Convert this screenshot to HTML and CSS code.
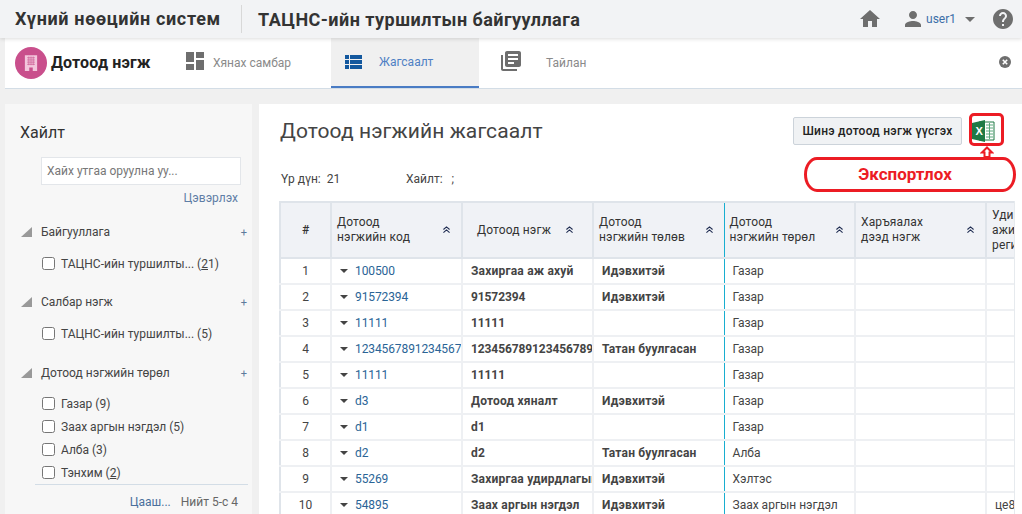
FILE: index.html
```html
<!DOCTYPE html>
<html>

<head>
    <title>Дотоод нэгж</title>
    <meta charset="utf-8" />
    <link rel="stylesheet" href="styles.css">
</head>

<body>
    <header class="topbar">
        <div class="app-name">Хүний нөөцийн систем</div>
        <div class="org-name">ТАЦНС-ийн туршилтын байгууллага</div>
        <div class="top-tools">
            <svg class="top-home" viewBox="0 0 24 24"><path d="M10 20v-6h4v6h5v-8h3L12 3 2 12h3v8z" /></svg>
            <svg class="top-user" viewBox="0 0 24 24"><path d="M12 12c2.21 0 4-1.79 4-4s-1.79-4-4-4-4 1.79-4 4 1.79 4 4 4zm0 2c-2.67 0-8 1.34-8 4v2h16v-2c0-2.66-5.33-4-8-4z" /></svg>
            <span class="user-name">user1</span>
            <span class="user-caret"></span>
            <svg class="top-help" viewBox="0 0 24 24"><path d="M12 2C6.48 2 2 6.48 2 12s4.48 10 10 10 10-4.48 10-10S17.52 2 12 2zm1 17h-2v-2h2v2zm2.07-7.75l-.9.92C13.45 12.9 13 13.5 13 15h-2v-.5c0-1.1.45-2.1 1.17-2.83l1.24-1.26c.37-.36.59-.86.59-1.41 0-1.1-.9-2-2-2s-2 .9-2 2H8c0-2.21 1.79-4 4-4s4 1.79 4 4c0 .88-.36 1.68-.93 2.25z" /></svg>
        </div>
    </header>

    <nav class="tabbar">
        <div class="module">
            <span class="module-icon">
                <svg viewBox="0 0 16 18" width="14" height="16">
                    <path class="bld" d="M1 0h14v18h-5v-4H6v4H1z" />
                    <path class="bld-lines" d="M3.5 3h9M3.5 5.5h9M3.5 8h9M3.5 10.5h9M5.5 1.5v10M8 1.5v10M10.5 1.5v10" />
                </svg>
            </span>
            <span class="module-name">Дотоод нэгж</span>
        </div>
        <a class="tab tab-board">
            <svg class="tab-icon" viewBox="3 3 18 18"><path d="M3 13h8V3H3v10zm0 8h8v-6H3v6zm10 0h8V11h-8v10zm0-18v6h8V3h-8z" /></svg>
            <span>Хянах самбар</span>
        </a>
        <a class="tab tab-list active">
            <svg class="list-icon" viewBox="0 0 17 14"><path d="M0 0h17v4H0zM0 5h17v4H0zM0 10h17v4H0z" /><path class="list-cut" d="M4.5 0v14" /></svg>
            <span>Жагсаалт</span>
        </a>
        <a class="tab tab-report">
            <svg class="report-icon" viewBox="2 2 20 20"><path d="M4 6H2v14c0 1.1.9 2 2 2h14v-2H4V6zm16-4H8c-1.1 0-2 .9-2 2v12c0 1.1.9 2 2 2h12c1.1 0 2-.9 2-2V4c0-1.1-.9-2-2-2zm-1 9H9V9h10v2zm-4 4H9v-2h6v2zm4-8H9V5h10v2z" /></svg>
            <span>Тайлан</span>
        </a>
        <svg class="tab-close" viewBox="0 0 12 12">
            <circle cx="6" cy="6" r="6" />
            <path d="M3.8 3.8l4.4 4.4M8.2 3.8l-4.4 4.4" />
        </svg>
    </nav>

    <div class="content">
        <aside class="sidebar">
            <h2 class="side-title">Хайлт</h2>
            <div class="search-box">Хайх утгаа оруулна уу...</div>
            <div class="clear-link">Цэвэрлэх</div>

            <div class="facet">
                <div class="facet-head">
                    <svg class="facet-arrow" viewBox="0 0 11 10"><path d="M11 0v10H0z" /></svg>
                    <span class="facet-name">Байгууллага</span>
                    <span class="facet-plus">+</span>
                </div>
                <label class="facet-item"><input type="checkbox"><span>ТАЦНС-ийн туршилты... (<u>2</u>1)</span></label>
            </div>

            <div class="facet">
                <div class="facet-head">
                    <svg class="facet-arrow" viewBox="0 0 11 10"><path d="M11 0v10H0z" /></svg>
                    <span class="facet-name">Салбар нэгж</span>
                    <span class="facet-plus">+</span>
                </div>
                <label class="facet-item"><input type="checkbox"><span>ТАЦНС-ийн туршилты... (5)</span></label>
            </div>

            <div class="facet facet-last">
                <div class="facet-head">
                    <svg class="facet-arrow" viewBox="0 0 11 10"><path d="M11 0v10H0z" /></svg>
                    <span class="facet-name">Дотоод нэгжийн төрөл</span>
                    <span class="facet-plus">+</span>
                </div>
                <label class="facet-item"><input type="checkbox"><span>Газар (9)</span></label>
                <label class="facet-item"><input type="checkbox"><span>Заах аргын нэгдэл (5)</span></label>
                <label class="facet-item"><input type="checkbox"><span>Алба (3)</span></label>
                <label class="facet-item"><input type="checkbox"><span>Тэнхим (<u>2</u>)</span></label>
            </div>
            <div class="facet-foot">
                <span class="more-link">Цааш...</span>
                <span>Нийт 5-с 4</span>
            </div>
        </aside>

        <main class="main">
            <div class="main-head">
                <h1 class="page-title">Дотоод нэгжийн жагсаалт</h1>
                <button class="new-btn">Шинэ дотоод нэгж үүсгэх</button>
                <svg class="excel-icon" viewBox="0 0 23 22">
                    <path class="xl-sheet" d="M7 2h15v18H7z" />
                    <path class="xl-lines" d="M14 5h7M14 8h7M14 11h7M14 14h7M14 17h7M17.500 3v16" />
                    <path class="xl-cover" d="M0 3l13-3v22L0 19z" />
                    <text class="xl-x" x="3.500" y="15">X</text>
                </svg>
            </div>
            <div class="summary">
                <span class="sum-count">Үр дүн:&nbsp; 21</span>
                <span class="sum-query">Хайлт: &nbsp; ;</span>
            </div>

            <div class="table-wrap">
                <table class="grid">
                    <colgroup>
                        <col class="col-num">
                        <col class="col-std">
                        <col class="col-std">
                        <col class="col-std">
                        <col class="col-std">
                        <col class="col-std">
                        <col class="col-std">
                    </colgroup>
                    <thead>
                        <tr>
                            <th class="num">#</th>
                            <th><div class="th-in">Дотоод<br>нэгжийн код<svg class="sort" viewBox="0 0 8 8"><path d="M.5 4L4 1l3.500 3M.5 7.500L4 4.500l3.500 3" /></svg></div></th>
                            <th><div class="th-in th-center">Дотоод нэгж<svg class="sort" viewBox="0 0 8 8"><path d="M.5 4L4 1l3.500 3M.5 7.500L4 4.500l3.500 3" /></svg></div></th>
                            <th class="status"><div class="th-in">Дотоод<br>нэгжийн төлөв<svg class="sort" viewBox="0 0 8 8"><path d="M.5 4L4 1l3.500 3M.5 7.500L4 4.500l3.500 3" /></svg></div></th>
                            <th><div class="th-in">Дотоод<br>нэгжийн төрөл<svg class="sort" viewBox="0 0 8 8"><path d="M.5 4L4 1l3.500 3M.5 7.500L4 4.500l3.500 3" /></svg></div></th>
                            <th><div class="th-in">Харъяалах<br>дээд нэгж<svg class="sort" viewBox="0 0 8 8"><path d="M.5 4L4 1l3.500 3M.5 7.500L4 4.500l3.500 3" /></svg></div></th>
                            <th><div class="th-in">Удирдах<br>ажилтны<br>регистр</div></th>
                        </tr>
                    </thead>
                    <tbody>
                        <tr><td class="num">1</td><td class="code"><i></i><a>100500</a></td><td class="b">Захиргаа аж ахуй</td><td class="b status">Идэвхитэй</td><td>Газар</td><td></td><td></td></tr>
                        <tr><td class="num">2</td><td class="code"><i></i><a>91572394</a></td><td class="b n">91572394</td><td class="b status">Идэвхитэй</td><td>Газар</td><td></td><td></td></tr>
                        <tr><td class="num">3</td><td class="code"><i></i><a>11111</a></td><td class="b n">11111</td><td class="b status"></td><td>Газар</td><td></td><td></td></tr>
                        <tr><td class="num">4</td><td class="code"><i></i><a>1234567891234567</a></td><td class="b n">123456789123456789</td><td class="b status">Татан буулгасан</td><td>Газар</td><td></td><td></td></tr>
                        <tr><td class="num">5</td><td class="code"><i></i><a>11111</a></td><td class="b n">11111</td><td class="b status"></td><td>Газар</td><td></td><td></td></tr>
                        <tr><td class="num">6</td><td class="code"><i></i><a>d3</a></td><td class="b">Дотоод хяналт</td><td class="b status">Идэвхитэй</td><td>Газар</td><td></td><td></td></tr>
                        <tr><td class="num">7</td><td class="code"><i></i><a>d1</a></td><td class="b">d1</td><td class="b status"></td><td>Газар</td><td></td><td></td></tr>
                        <tr><td class="num">8</td><td class="code"><i></i><a>d2</a></td><td class="b">d2</td><td class="b status">Татан буулгасан</td><td>Алба</td><td></td><td></td></tr>
                        <tr><td class="num">9</td><td class="code"><i></i><a>55269</a></td><td class="b">Захиргаа удирдлагын</td><td class="b status">Идэвхитэй</td><td>Хэлтэс</td><td></td><td></td></tr>
                        <tr><td class="num">10</td><td class="code"><i></i><a>54895</a></td><td class="b">Заах аргын нэгдэл</td><td class="b status">Идэвхитэй</td><td>Заах аргын нэгдэл</td><td></td><td>це89</td></tr>
                    </tbody>
                </table>
            </div>
        </main>
    </div>

    <!-- annotation drawn on top of the screenshot -->
    <div class="mark-box"></div>
    <svg class="mark-arrow" viewBox="0 0 14 12"><path d="M7 1.500L12 6.500H9.500V11H4.500V6.500H2z" /></svg>
    <div class="mark-label">Экспортлох</div>
</body>

</html>
```

FILE: styles.css
```css
html,
body {
    margin: 0;
    height: 514px;
    overflow: hidden;
}

body {
    position: relative;
    background-color: #f0f0f0;
    font-family: Roboto, "Liberation Sans", sans-serif;
    font-size: 12px;
    color: #333;
}

/* top bar */
.topbar {
    display: flex;
    align-items: center;
    height: 38px;
    padding-left: 15px;
    background-color: #f2f3f5;
    box-shadow: 0 1px 4px rgba(0, 0, 0, .14);
    position: relative;
    z-index: 1;
}

.app-name {
    width: 226px;
    height: 28px;
    line-height: 28px;
    border-right: 1px solid #d8d8d8;
    font-size: 18px;
    font-weight: 700;
    letter-spacing: .65px;
    color: #333;
}

.org-name {
    margin-left: 16px;
    font-size: 18px;
    font-weight: 700;
    letter-spacing: .47px;
    color: #333;
}

.top-tools {
    display: flex;
    align-items: center;
    margin-left: auto;
    padding-right: 7px;
}

.top-tools svg {
    fill: #6e6e6e;
}

.top-home {
    width: 24px;
    height: 24px;
}

.top-user {
    width: 24px;
    height: 24px;
    margin-left: 19px;
}

.user-name {
    margin-left: 1px;
    color: #3c6ea8;
}

.user-caret {
    margin-left: 9px;
    border-top: 5px solid #6e6e6e;
    border-left: 5px solid transparent;
    border-right: 5px solid transparent;
}

.top-help {
    width: 24px;
    height: 24px;
    margin-left: 16px;
}

/* tab bar */
.tabbar {
    display: flex;
    align-items: stretch;
    height: 50px;
    margin-left: 5px;
    background-color: #fff;
    border-bottom: 1px solid #d3dde6;
}

.module {
    display: flex;
    align-items: center;
    width: 157px;
    padding-left: 10px;
    padding-bottom: 1px;
    box-sizing: border-box;
}

.module-icon {
    display: flex;
    align-items: center;
    justify-content: center;
    width: 32px;
    height: 32px;
    border-radius: 50%;
    background-color: #c94f8c;
}

.bld {
    fill: #f3c6dc;
}

.bld-lines {
    stroke: #c94f8c;
    stroke-width: .7;
    fill: none;
}

.module-name {
    margin-left: 4px;
    font-size: 16px;
    font-weight: 700;
    letter-spacing: .15px;
    color: #222;
}

.tab {
    display: flex;
    align-items: center;
    box-sizing: border-box;
    color: #8a8a8a;
}

.tab-board {
    width: 169px;
    padding-left: 24px;
}

.tab-icon {
    width: 18px;
    height: 18px;
    margin-right: 9px;
    margin-top: -4px;
    fill: #6e6e6e;
}

.tab-list {
    width: 148px;
    height: 50px;
    padding-left: 14px;
    background-color: #f0f0f0;
    border-bottom: 2px solid #4a7cc4;
    color: #4f80c4;
}

.list-icon {
    width: 17px;
    height: 14px;
    margin-right: 17px;
    fill: #13589e;
}

.list-cut {
    stroke: #f0f0f0;
    stroke-width: 1;
}

.tab-report {
    padding-left: 22px;
}

.report-icon {
    width: 20px;
    height: 20px;
    margin-right: 25px;
    margin-top: -5px;
    fill: #6e6e6e;
}

.tab-close {
    width: 12px;
    height: 12px;
    margin-left: auto;
    margin-right: 11px;
    margin-top: 18px;
    fill: #6e6e6e;
    stroke: #fff;
    stroke-width: 1.600;
}

.tab-close circle {
    stroke: none;
}

/* page body */
.content {
    display: flex;
    margin-left: 5px;
    margin-top: 15px;
    height: 410px;
}

.sidebar {
    width: 247px;
    flex-shrink: 0;
    box-sizing: border-box;
    padding: 19px 0 0 15px;
    background-color: #f7f7f7;
}

.side-title {
    margin: 0;
    font-size: 16px;
    font-weight: 400;
    line-height: 20px;
    color: #333;
}

.search-box {
    width: 200px;
    height: 28px;
    line-height: 26px;
    box-sizing: border-box;
    margin: 14px 0 0 21px;
    padding-left: 5px;
    background-color: #fff;
    border: 1px solid #e3e6ea;
    color: #777;
}

.clear-link {
    width: 218px;
    margin-top: 6px;
    text-align: right;
    color: #5f7ea6;
    line-height: 14px;
}

.facet {
    margin-top: 17px;
}

.facet-head {
    display: flex;
    align-items: center;
    height: 20px;
}

.facet-arrow {
    width: 11px;
    height: 10px;
    fill: #999;
    margin-left: 1px;
}

.facet-name {
    margin-left: 9px;
    color: #444;
}

.facet-plus {
    margin-left: auto;
    margin-right: 5px;
    font-size: 11px;
    color: #5d7a9c;
}

.facet-item {
    display: flex;
    align-items: center;
    height: 23px;
    margin-left: 22px;
    color: #444;
}

.facet-item input {
    margin: 0 6px 0 0;
}

.facet-head+.facet-item {
    margin-top: 10px;
}

.facet-last {
    margin-top: 18px;
}

.facet-last .facet-head+.facet-item {
    margin-top: 9px;
}

.facet-foot {
    display: flex;
    justify-content: flex-end;
    gap: 10px;
    margin: 0 4px 0 15px;
    padding: 10px 10px 0 0;
    border-top: 1px solid #d3dde6;
    color: #666;
}

.more-link {
    color: #4a6f9c;
}

/* main column */
.main {
    flex: 1;
    min-width: 0;
    margin-left: 7px;
    padding: 0 7px 0 21px;
    background-color: #fff;
}

.main-head {
    display: flex;
    align-items: center;
    height: 53px;
}

.page-title {
    margin: 0;
    font-size: 21px;
    font-weight: 400;
    letter-spacing: .1px;
    color: #444;
}

.new-btn {
    width: 169px;
    height: 28px;
    margin-left: auto;
    background-color: #f0f2f4;
    border: 1px solid #ccd3da;
    border-radius: 2px;
    font-family: inherit;
    font-size: 12px;
    font-weight: 500;
    letter-spacing: .25px;
    color: #222;
    padding: 0;
}

.excel-icon {
    width: 23px;
    height: 22px;
    margin: 0 20px 0 10px;
}

.xl-sheet {
    fill: #fff;
    stroke: #1f7a45;
    stroke-width: 1;
}

.xl-lines {
    stroke: #5aa77c;
    stroke-width: 1;
    fill: none;
}

.xl-cover {
    fill: #1f7a45;
}

.xl-x {
    font-family: "Liberation Sans", sans-serif;
    font-size: 11px;
    font-weight: 700;
    fill: #fff;
}

.summary {
    display: flex;
    align-items: center;
    height: 44px;
    padding-left: 1px;
    color: #444;
}

.sum-count {
    width: 125px;
}

/* table */
.table-wrap {
    overflow: hidden;
    height: 313px;
    margin-left: -1px;
    border-right: 1px solid #e6eaee;
}

.grid {
    table-layout: fixed;
    width: 838px;
    border-collapse: collapse;
    border-top: 2px solid #dfe4ea;
    border-left: 2px solid #dfe4ea;
}

.col-num {
    width: 51px;
}

.col-std {
    width: 131px;
}

.grid th {
    height: 54px;
    padding: 0;
    background-color: #f0f2f6;
    border-right: 2px solid #dfe4ea;
    border-bottom: 2px solid #dfe4ea;
    font-weight: 400;
    text-align: left;
    color: #333;
}

.grid th.num {
    text-align: center;
    font-weight: 500;
}

.th-in {
    position: relative;
    padding-left: 5px;
    line-height: 15px;
    letter-spacing: .15px;
}

.th-center {
    padding-left: 14px;
}

.sort {
    position: absolute;
    top: 50%;
    right: 11px;
    width: 7px;
    height: 7px;
    margin-top: -4px;
    fill: none;
    stroke: #1d2a50;
    stroke-width: 1.300;
}

.th-center .sort {
    right: 19px;
}

.grid td {
    height: 24px;
    padding: 0 0 0 8px;
    border-right: 2px solid #eef0f3;
    border-bottom: 2px solid #eef0f3;
    white-space: nowrap;
    overflow: hidden;
    color: #444;
}

.grid td.num {
    padding: 0;
    text-align: center;
}

.grid .b {
    font-weight: 700;
    letter-spacing: .2px;
}

.grid .n {
    letter-spacing: -.1px;
}

.grid td.code {
    padding-left: 8px;
    letter-spacing: -.1px;
    color: #2a6496;
}

.code i {
    display: inline-block;
    margin-right: 7px;
    vertical-align: 2px;
    border-top: 4px solid #444;
    border-left: 4px solid transparent;
    border-right: 4px solid transparent;
}

.code a {
    color: #2a6496;
}

.grid th.status,
.grid td.status {
    border-right: 1px solid #18aed0;
}

/* red annotation */
.mark-box {
    position: absolute;
    left: 969px;
    top: 113px;
    width: 29px;
    height: 27px;
    border: 3px solid #ec1c24;
    border-radius: 5px;
}

.mark-arrow {
    position: absolute;
    left: 980px;
    top: 146px;
    width: 14px;
    height: 12px;
    fill: #fff;
    stroke: #ec1c24;
    stroke-width: 2;
}

.mark-label {
    position: absolute;
    left: 804px;
    top: 157px;
    width: 196px;
    height: 29px;
    padding-right: 10px;
    line-height: 29px;
    border: 3px solid #ec1c24;
    border-radius: 13px / 50%;
    background-color: #fff;
    text-align: center;
    font-size: 17px;
    font-weight: 700;
    color: #ec1c24;
}
```
